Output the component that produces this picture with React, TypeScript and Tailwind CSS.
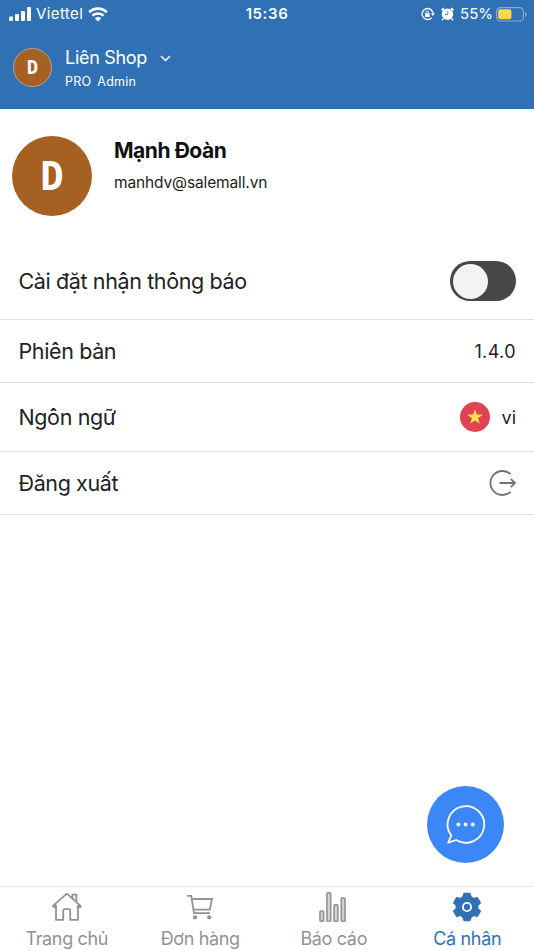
import type { ReactNode } from "react";

const SignalIcon = () => (
    <svg className="h-[14px] w-[23px]" viewBox="0 0 23 14" fill="currentColor">
        <rect x="0" y="9.5" width="4" height="4.5" rx="1" />
        <rect x="6" y="7" width="4" height="7" rx="1" />
        <rect x="12" y="4" width="4" height="10" rx="1" />
        <rect x="18" y="0" width="4" height="14" rx="1" />
    </svg>
);

const WifiIcon = () => (
    <svg className="h-[15px] w-[20px]" viewBox="0 0 20 15" fill="none" stroke="currentColor">
        <path d="M1.2 5.2a12.6 12.6 0 0 1 17.6 0" strokeWidth="2.6" />
        <path d="M4.4 8.7a8 8 0 0 1 11.2 0" strokeWidth="2.5" />
        <path d="M10 14.6l-3.3-3.4a4.8 4.8 0 0 1 6.6 0z" fill="currentColor" stroke="none" />
    </svg>
);

const RotationLockIcon = () => (
    <svg className="h-[14px] w-[14px]" viewBox="0 0 14 14" fill="none" stroke="currentColor">
        <path d="M12 6A5.5 5.5 0 1 0 10.6 10.8" strokeWidth="1.3" />
        <path d="M9.9 6.2h4l-2 2.8z" fill="currentColor" stroke="none" />
        <rect x="4" y="6.2" width="4.7" height="3.7" rx="0.5" fill="currentColor" stroke="none" />
        <path d="M5 6.5V5.3a1.35 1.35 0 0 1 2.7 0v1.2" strokeWidth="0.9" />
    </svg>
);

const AlarmIcon = () => (
    <svg className="h-[14px] w-[13px]" viewBox="0 0 13 14" fill="none" stroke="currentColor">
        <path d="M.7 3.3L3 1.2M12.3 3.3L10 1.2" strokeWidth="2" />
        <path d="M2.3 11.5L1 13.2M10.7 11.5l1.3 1.7" strokeWidth="1.5" />
        <circle cx="6.5" cy="7.2" r="5.7" fill="currentColor" stroke="none" />
        <path d="M6.8 4v3.5H4" stroke="#3071b6" strokeWidth="0.8" />
    </svg>
);

const BatteryIcon = () => (
    <svg className="h-[15px] w-[31px]" viewBox="0 0 31 15" fill="none">
        <rect x="0.6" y="0.6" width="26.8" height="13.4" rx="3.8" stroke="#84a9d2" strokeWidth="1.2" />
        <rect x="2.2" y="2.3" width="13.2" height="10" rx="2" fill="#f9d849" />
        <path d="M29 5v4.8c1-.3 1.6-1.2 1.6-2.4S30 5.3 29 5z" fill="#84a9d2" />
    </svg>
);

const LogoutIcon = () => (
    <svg className="h-[28px] w-[28px]" viewBox="0 0 28 28" fill="none" stroke="#737373" strokeWidth="1.8">
        <path d="M22.6 5.2A12 12 0 1 0 22.6 22.8" />
        <path d="M11.5 14H27M22.8 9.9L27 14l-4.2 4.1" />
    </svg>
);

const HomeIcon = () => (
    <svg className="h-[30px] w-[30px] shrink-0" viewBox="0 0 30 30" fill="none" stroke="currentColor" strokeWidth="1.8" strokeLinejoin="round">
        <path d="M4 13.4L1.7 15.3 1 13.8 14.8 1.6l5.6 5V2.6h4v7.6l4.4 4-.8 1.1-2-1.6v14.2h-7.8V18.6a1.4 1.4 0 0 0-1.4-1.4h-4.2a1.4 1.4 0 0 0-1.4 1.4v9.3H4z" />
        <path d="M20.4 6.5l4 3.7" />
    </svg>
);

const CartIcon = () => (
    <svg className="h-[30px] w-[30px] shrink-0" viewBox="0 0 30 30" fill="none" stroke="currentColor" strokeWidth="1.8">
        <path d="M2 3.8h4.2L9 21.2h16" />
        <path d="M6.8 7H27l-2.2 10.6H8.4" />
        <circle cx="10" cy="25.3" r="2.1" fill="currentColor" stroke="none" />
        <circle cx="24.2" cy="25.3" r="2.1" fill="currentColor" stroke="none" />
    </svg>
);

const ReportIcon = () => (
    <svg className="h-[30px] w-[30px] shrink-0" viewBox="0 0 30 30" fill="#d4d4d4" stroke="currentColor" strokeWidth="1.6">
        <rect x="1" y="19" width="3.6" height="10.2" rx="0.8" />
        <rect x="7.9" y="0.8" width="3.8" height="28.4" rx="0.8" />
        <rect x="15" y="12.9" width="3.8" height="16.3" rx="0.8" />
        <rect x="22.3" y="6" width="3.7" height="23.2" rx="0.8" />
    </svg>
);

const GearIcon = () => (
    <svg className="h-[30px] w-[30px] shrink-0" viewBox="0 0 30 30">
        <g fill="currentColor" stroke="currentColor" strokeWidth="1" strokeLinejoin="round">
            <circle cx="15" cy="15" r="11" />
            <path d="M11.9 1.2h6.2l1.4 5h-9zM11.9 28.8h6.2l1.4-5h-9z" />
            <path d="M11.9 1.2h6.2l1.4 5h-9zM11.9 28.8h6.2l1.4-5h-9z" transform="rotate(60 15 15)" />
            <path d="M11.9 1.2h6.2l1.4 5h-9zM11.9 28.8h6.2l1.4-5h-9z" transform="rotate(120 15 15)" />
        </g>
        <circle cx="15" cy="15" r="4.1" fill="none" stroke="white" strokeWidth="1.9" />
    </svg>
);

const ChatIcon = () => (
    <svg className="h-[40px] w-[40px]" viewBox="0.6 0.7 40 40" fill="none" stroke="white" strokeWidth="1.8" strokeLinejoin="round">
        <path d="M5.9 31.2A18.3 18.3 0 1 1 10.8 35.7L2.8 38.4z" />
        <g fill="white" stroke="none">
            <circle cx="13" cy="20.2" r="1.9" />
            <circle cx="20.2" cy="20.2" r="1.9" />
            <circle cx="27.4" cy="20.2" r="1.9" />
        </g>
    </svg>
);

const Row = ({ label, className, children }: { label: string; className: string; children: ReactNode }) => (
    <div className={`flex items-center justify-between border-b border-[#dfdfdf] pl-[18.5px] pr-[18px] ${className}`}>
        <span className="text-[21.5px] leading-7 tracking-[-0.38px]">{label}</span>
        {children}
    </div>
);

const Tab = ({ label, active, children }: { label: string; active?: boolean; children: ReactNode }) => (
    <div className={`flex flex-1 flex-col items-center pt-[5px] ${active ? "text-[#3071b6]" : "text-[#929292]"}`}>
        {children}
        <span className="mt-[6px] whitespace-nowrap text-[18px] leading-[22px] tracking-[-0.35px]">{label}</span>
    </div>
);

const App = () => {
    return (
        <div className="relative flex h-[950px] w-[534px] flex-col overflow-hidden bg-white font-['Inter',sans-serif] text-[#222222]">
            {/* Header */}
            <header className="h-[108.5px] bg-[#3071b6] text-white">
                <div className="grid h-7 grid-cols-3 items-center pl-[9px] pr-[7px] text-[15px]">
                    <div className="flex items-center">
                        <SignalIcon />
                        <span className="ml-[4px] mr-[5px] tracking-[0.4px]">Viettel</span>
                        <WifiIcon />
                    </div>
                    <span className="pr-[2px] text-center font-semibold tracking-[0.6px]">15:36</span>
                    <div className="flex items-center justify-end">
                        <RotationLockIcon />
                        <span className="ml-[6px]"><AlarmIcon /></span>
                        <span className="ml-[6px] mr-[3px]">55%</span>
                        <BatteryIcon />
                    </div>
                </div>

                <div className="flex pl-[13px] pt-[19px]">
                    <div className="mt-[1px] flex h-[39px] w-[39px] items-center justify-center rounded-full border border-[#a9a6a5] bg-[#a56022] pb-[1px] font-['DejaVu_Sans_Mono',monospace] text-[19px] font-bold">
                        D
                    </div>
                    <div className="ml-[13px]">
                        <div className="flex items-center">
                            <span className="text-[18px] leading-[22px] tracking-[-0.3px]">Liên Shop</span>
                            <svg className="ml-[13px] h-[7px] w-[11px]" viewBox="0 0 11 7" fill="none" stroke="white" strokeWidth="1.5">
                                <path d="M1 1l4.5 4.5L10 1" />
                            </svg>
                        </div>
                        <div className="mt-[4px] flex gap-[6px] text-[12.5px] leading-[18px] tracking-[0.25px]">
                            <span>PRO</span>
                            <span>Admin</span>
                        </div>
                    </div>
                </div>
            </header>

            {/* Profile */}
            <section className="flex h-[134.5px] pl-[12px] pt-[27px]">
                <div className="flex h-[80px] w-[80px] items-center justify-center rounded-full bg-[#a56022] pt-[3px] font-['DejaVu_Sans_Mono',monospace] text-[39px] font-bold text-white">
                    D
                </div>
                <div className="ml-[22px]">
                    <h1 className="text-[21px] font-bold leading-[30px] tracking-[-0.45px] text-[#111111]">Mạnh Đoàn</h1>
                    <p className="mt-[6px] text-[15.5px] leading-[22px] tracking-[-0.13px]">manhdv@salemall.vn</p>
                </div>
            </section>

            {/* Settings */}
            <main className="flex-1">
                <Row label="Cài đặt nhận thông báo" className="h-[76.5px]">
                    <div className="mt-[1px] h-[40px] w-[66px] rounded-full bg-[#474747] p-[2.5px]">
                        <div className="h-[35px] w-[35px] rounded-full bg-[#f3f3f3]" />
                    </div>
                </Row>
                <Row label="Phiên bản" className="h-[63px]">
                    <span className="pt-[1px] text-[18px] tracking-[0.4px]">1.4.0</span>
                </Row>
                <Row label="Ngôn ngữ" className="h-[69px]">
                    <div className="flex items-center gap-[12px]">
                        <svg className="h-[30px] w-[30px]" viewBox="0 0 30 30">
                            <circle cx="15" cy="15" r="15" fill="#e04352" />
                            <path d="M15 7.2l1.9 5.4 5.8.1-4.6 3.5 1.7 5.5-4.8-3.3-4.8 3.3 1.7-5.5-4.6-3.5 5.8-.1z" fill="#ffe44d" />
                        </svg>
                        <span className="pt-[1px] text-[18px]">vi</span>
                    </div>
                </Row>
                <Row label="Đăng xuất" className="h-[63px]">
                    <LogoutIcon />
                </Row>
            </main>

            {/* Bottom navigation */}
            <nav className="flex h-[64px] border-t border-[#e8e8e8]">
                <Tab label="Trang chủ">
                    <HomeIcon />
                </Tab>
                <Tab label="Đơn hàng">
                    <CartIcon />
                </Tab>
                <Tab label="Báo cáo">
                    <ReportIcon />
                </Tab>
                <Tab label="Cá nhân" active>
                    <GearIcon />
                </Tab>
            </nav>

            {/* Chat button */}
            <button className="absolute bottom-[87px] right-[30px] flex h-[77px] w-[77px] items-center justify-center rounded-full bg-[#3b87f7]">
                <ChatIcon />
            </button>
        </div>
    );
};

export default App;
